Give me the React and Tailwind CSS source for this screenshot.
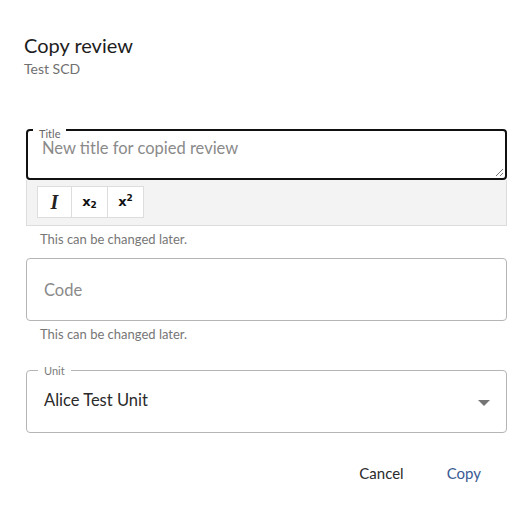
import { useState } from 'react';

const font = { fontFamily: 'Lato, "Noto Sans", sans-serif' };

function Helper({ children }) {
  return <p className="pl-[14px] pt-[4px] text-[13px] leading-[18px] text-[#767676]">{children}</p>;
}

export default function App() {
  const [title, setTitle] = useState('');
  const [code, setCode] = useState('');

  return (
    <div style={font} className="w-[530px] h-[527px] bg-white text-[#1f1f1f]">
      {/* Header */}
      <div className="px-6 pt-[32px]">
        <h2 className="text-[20px] leading-[26px] text-[#1d1d1d]">Copy review</h2>
        <p className="mt-[2px] text-[14px] leading-[18px] text-[#707070]">Test SCD</p>
      </div>

      <div className="pl-[26px] pr-[23px] pt-[51px]">
        {/* Title (focused) */}
        <div className="relative h-[51px] border-2 border-[#111] rounded-[4px]">
          <span className="absolute left-[5px] -top-[3px] px-[6px] bg-white text-[11px] leading-[11px] text-[#666]">Title</span>
          <textarea
            value={title}
            onChange={(e) => setTitle(e.target.value)}
            placeholder="New title for copied review"
            className="absolute left-[14px] top-[6px] right-[4px] bottom-[2px] resize-none outline-none text-[16.5px] leading-[22px] placeholder:text-[#8a8a8a] bg-transparent"
          />
          <svg className="absolute right-[1px] bottom-[1px]" width="10" height="10" viewBox="0 0 10 10">
            <path d="M9 2L2 9M9 6L6 9" stroke="#777" strokeWidth="1" />
          </svg>
        </div>

        {/* Toolbar */}
        <div className="h-[46px] bg-[#f3f3f3] border border-t-0 border-[#dcdcdc] flex items-center px-[10px] pb-[2px]">
          <div className="flex">
            <button className="w-[35px] h-[32px] bg-white border border-[#dddddd] flex items-center justify-center">
              <span style={{ fontFamily: '"Liberation Serif", serif' }} className="text-[20px] font-bold italic text-[#222]">I</span>
            </button>
            <button className="w-[36px] h-[32px] bg-white border border-l-0 border-[#dddddd] flex items-center justify-center">
              <span style={{ fontFamily: '"DejaVu Sans", sans-serif' }} className="text-[13px] font-bold text-[#111]">x<sub className="text-[9px]">2</sub></span>
            </button>
            <button className="w-[36px] h-[32px] bg-white border border-l-0 border-[#dddddd] flex items-center justify-center">
              <span style={{ fontFamily: '"DejaVu Sans", sans-serif' }} className="text-[13px] font-bold text-[#111]">x<sup className="text-[9px]">2</sup></span>
            </button>
          </div>
        </div>
        <Helper>This can be changed later.</Helper>

        {/* Code */}
        <div className="mt-[10px]">
          <input
            value={code}
            onChange={(e) => setCode(e.target.value)}
            placeholder="Code"
            className="w-full h-[63px] border border-[#b5b5b5] rounded-[4px] px-[17px] text-[16.5px] outline-none placeholder:text-[#8a8a8a]"
          />
        </div>
        <Helper>This can be changed later.</Helper>

        {/* Unit */}
        <div className="relative mt-[27px] h-[63px] border border-[#b5b5b5] rounded-[4px] flex items-center pl-[17px] pr-[16px] pb-[2px]">
          <span className="absolute left-[11px] -top-[6px] px-[6px] bg-white text-[11px] leading-[11px] text-[#7a7a7a]">Unit</span>
          <span className="flex-1 text-[16.5px] text-[#2a2a2a]">Alice Test Unit</span>
          <svg className="mt-[4px]" width="12" height="6" viewBox="0 0 12 6">
            <path d="M0 0H12L6 6Z" fill="#757575" />
          </svg>
        </div>
      </div>

      {/* Actions */}
      <div className="flex justify-end items-center gap-[43px] pr-[49px] pt-[29px]">
        <button className="text-[15px] text-[#2a2a2a]">Cancel</button>
        <button className="text-[15px] text-[#3a5a93]">Copy</button>
      </div>
    </div>
  );
}
